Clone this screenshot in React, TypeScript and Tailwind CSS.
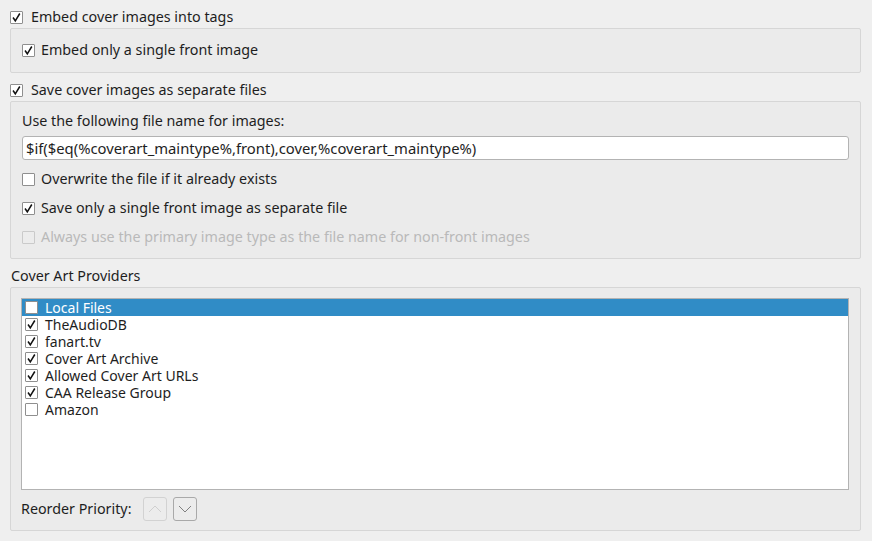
import React from 'react';

type CheckProps = { checked?: boolean; disabled?: boolean };

const CheckBox: React.FC<CheckProps> = ({ checked, disabled }) => (
  <span
    className={`flex h-[13px] w-[13px] shrink-0 items-center justify-center rounded-[1px] border ${
      disabled ? 'border-[#cacaca] bg-[#ececec]' : 'border-[#8f8f8f] bg-white'
    }`}
  >
    {checked && (
      <svg width="11" height="11" viewBox="0 0 11 11">
        <path d="M2 5.5 L4.3 8.8 L8.8 1.5" fill="none" stroke="#111" strokeWidth="1.5" />
      </svg>
    )}
  </span>
);

const CheckRow: React.FC<CheckProps & { label: string; className?: string }> = ({
  label,
  checked,
  disabled,
  className = '',
}) => (
  <div className={`flex h-[22px] items-center ${className}`}>
    <CheckBox checked={checked} disabled={disabled} />
    <span className={disabled ? 'text-[#b9b9b9]' : 'text-[#1e1e1e]'}>{label}</span>
  </div>
);

const providers = [
  { name: 'Local Files', checked: false },
  { name: 'TheAudioDB', checked: true },
  { name: 'fanart.tv', checked: true },
  { name: 'Cover Art Archive', checked: true },
  { name: 'Allowed Cover Art URLs', checked: true },
  { name: 'CAA Release Group', checked: true },
  { name: 'Amazon', checked: false },
];

const Chevron: React.FC<{ up?: boolean; color: string }> = ({ up, color }) => (
  <svg width="14" height="8" viewBox="0 0 14 8">
    <path
      d={up ? 'M1 7 L7 1 L13 7' : 'M1 1 L7 7 L13 1'}
      fill="none"
      stroke={color}
      strokeWidth="1"
    />
  </svg>
);

const App: React.FC = () => {
  return (
    <div
      className="h-[541px] w-[872px] bg-[#efefef] pl-[10px] pr-[11px] pt-[6px] text-[14.3px] text-[#1e1e1e]"
      style={{ fontFamily: '"Noto Sans", "Open Sans", sans-serif' }}
    >
      {/* Embed section */}
      <CheckRow label="Embed cover images into tags" checked className="gap-[8px]" />
      <div className="rounded-[2px] border border-[#d6d6d6] bg-[#ebebeb] pb-[11px] pl-[11px] pt-[10px]">
        <CheckRow label="Embed only a single front image" checked className="gap-[6px]" />
      </div>

      {/* Save section */}
      <CheckRow label="Save cover images as separate files" checked className="mt-[6px] gap-[8px]" />
      <div className="rounded-[2px] border border-[#d6d6d6] bg-[#ebebeb] pb-[10px] pl-[11px] pr-[11px] pt-[9px]">
        <div className="flex h-[20px] items-center">Use the following file name for images:</div>
        <div className="mt-[5px] flex h-[24px] items-center rounded-[3px] border border-[#b3b3b3] bg-white px-[3px] text-[14.8px]">
          $if($eq(%coverart_maintype%,front),cover,%coverart_maintype%)
        </div>
        <CheckRow label="Overwrite the file if it already exists" className="mt-[8px] gap-[6px]" />
        <CheckRow
          label="Save only a single front image as separate file"
          checked
          className="mt-[7px] gap-[6px]"
        />
        <CheckRow
          label="Always use the primary image type as the file name for non-front images"
          disabled
          className="mt-[7px] gap-[6px]"
        />
      </div>

      {/* Providers */}
      <div className="mt-[7px] flex h-[20px] items-center pl-[1px]">Cover Art Providers</div>
      <div className="mt-[1px] rounded-[2px] border border-[#d6d6d6] bg-[#ebebeb] pb-[9px] pl-[10px] pr-[11px] pt-[10px]">
        <div className="h-[192px] border border-[#b3b3b3] bg-white">
          {providers.map((p, i) => (
            <div
              key={p.name}
              className={`flex h-[17px] items-center gap-[7px] overflow-hidden pl-[3px] text-[14px] leading-[16px] ${
                i === 0 ? 'bg-[#308cc6] text-white' : ''
              }`}
            >
              <CheckBox checked={p.checked} />
              <span className="leading-[16px]">{p.name}</span>
            </div>
          ))}
        </div>
        <div className="mt-[7px] flex h-[24px] items-center">
          <span>Reorder Priority:</span>
          <button className="ml-[12px] flex h-[24px] w-[24px] items-center justify-center rounded-[3px] border border-[#d2d2d2] bg-[#ececec]">
            <Chevron up color="#cfcfcf" />
          </button>
          <button className="ml-[6px] flex h-[24px] w-[24px] items-center justify-center rounded-[3px] border border-[#a9a9a9] bg-[#ececec]">
            <Chevron color="#808080" />
          </button>
        </div>
      </div>
    </div>
  );
};

export default App;
